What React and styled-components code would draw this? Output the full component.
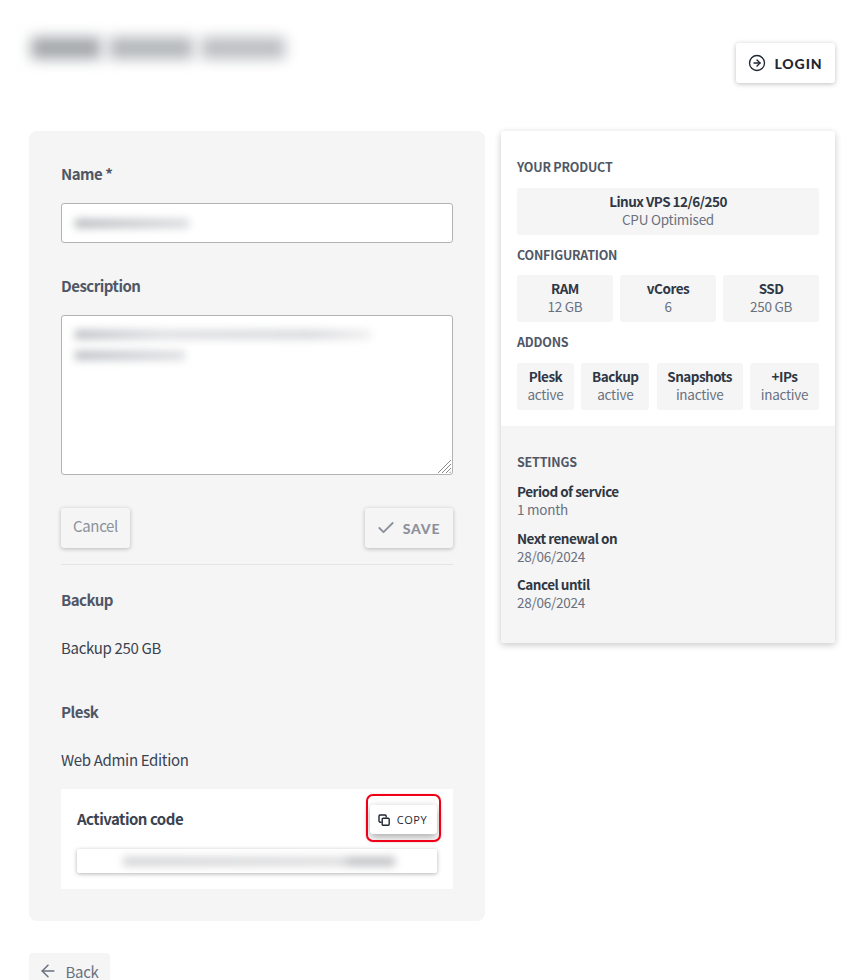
import styled, { createGlobalStyle } from "styled-components";
import { ArrowLeft, Check, CircleArrowRight } from "lucide-react";

const GlobalStyle = createGlobalStyle`
    html, body {
        margin: 0;
        height: 980px;
        overflow: hidden;
        background: #fff;
    }
    body {
        font-family: "Noto Sans CJK JP", "Source Sans Pro", "Open Sans", sans-serif;
        font-size: 15px;
        letter-spacing: -0.33px;
        color: #3b4351;
    }
    * {
        box-sizing: border-box;
    }
`;

const CopyIcon = () => (
    <svg width="12" height="12" viewBox="0 0 12 12" fill="none" stroke="currentColor" strokeWidth="1.4">
        <path d="M3.6 8.2H2a1.2 1.2 0 0 1-1-1V2a1.2 1.2 0 0 1 1-1h5.2a1.2 1.2 0 0 1 1 1v1.6" />
        <rect x="4.2" y="4.2" width="7" height="7" rx="1" />
    </svg>
);

const config = [
    { label: "RAM", value: "12 GB" },
    { label: "vCores", value: "6" },
    { label: "SSD", value: "250 GB" },
];

const addons = [
    { label: "Plesk", value: "active" },
    { label: "Backup", value: "active" },
    { label: "Snapshots", value: "inactive" },
    { label: "+IPs", value: "inactive" },
];

const settings = [
    { label: "Period of service", value: "1 month" },
    { label: "Next renewal on", value: "28/06/2024" },
    { label: "Cancel until", value: "28/06/2024" },
];

function App() {
    return (
        <Page>
            <GlobalStyle />
            <Header>
                <LogoArea>
                    <Blur $w={70} $h={22} $color="#a3a7ab" $blur={7} />
                    <Blur $w={84} $h={22} $color="#b4b7bb" $blur={7} />
                    <Blur $w={84} $h={22} $color="#bcbfc2" $blur={7} />
                </LogoArea>
                <LoginButton>
                    <CircleArrowRight size={18} strokeWidth={1.8} />
                    LOGIN
                </LoginButton>
            </Header>

            <Columns>
                <FormCard>
                    <Label>Name *</Label>
                    <InputBox>
                        <Blur $w={114} $h={9} $color="linear-gradient(90deg, #b5b8bc, #d9dadc)" $blur={4} />
                    </InputBox>
                    <Label $top={31}>Description</Label>
                    <TextareaBox>
                        <Blur $w={296} $h={9} $color="linear-gradient(90deg, #b9bcc0, #dcdde0 30%, #d6d7da 80%, #eeeeef)" $blur={4} />
                        <Blur $w={110} $h={9} $color="linear-gradient(90deg, #b9bcc0, #dcdde0)" $blur={4} />
                        <Grip width="14" height="14" viewBox="0 0 14 14" stroke="#8a8a8a" strokeWidth="1">
                            <path d="M1 14 14 1M5 14 14 5M9 14l5-5M12.5 14l1.5-1.5" />
                        </Grip>
                    </TextareaBox>
                    <Actions>
                        <CancelButton>Cancel</CancelButton>
                        <SaveButton>
                            <Check size={20} strokeWidth={2.2} />
                            SAVE
                        </SaveButton>
                    </Actions>
                    <Divider />
                    <Label $top={23}>Backup</Label>
                    <Value>Backup 250 GB</Value>
                    <Label $top={40}>Plesk</Label>
                    <Value>Web Admin Edition</Value>
                    <CodePanel>
                        <CodeHead>
                            <CodeTitle>Activation code</CodeTitle>
                            <CopyButton>
                                <CopyIcon />
                                COPY
                            </CopyButton>
                        </CodeHead>
                        <CodeField>
                            <Blur $w={272} $h={9} $color="linear-gradient(90deg, #d2d3d5, #dcdcde 80%, #bebfc2 84%, #bebfc2)" $blur={4} />
                        </CodeField>
                    </CodePanel>
                </FormCard>

                <SideCard>
                    <SideTop>
                        <SectionTitle>YOUR PRODUCT</SectionTitle>
                        <Tile>
                            <TileLabel>Linux VPS 12/6/250</TileLabel>
                            <TileValue>CPU Optimised</TileValue>
                        </Tile>
                        <SectionTitle $gap={12}>CONFIGURATION</SectionTitle>
                        <ConfigGrid>
                            {config.map((item) => (
                                <Tile key={item.label}>
                                    <TileLabel>{item.label}</TileLabel>
                                    <TileValue>{item.value}</TileValue>
                                </Tile>
                            ))}
                        </ConfigGrid>
                        <SectionTitle>ADDONS</SectionTitle>
                        <AddonRow>
                            {addons.map((item) => (
                                <Tile key={item.label}>
                                    <TileLabel>{item.label}</TileLabel>
                                    <TileValue>{item.value}</TileValue>
                                </Tile>
                            ))}
                        </AddonRow>
                    </SideTop>
                    <SideBottom>
                        <SectionTitle $gap={12}>SETTINGS</SectionTitle>
                        {settings.map((item) => (
                            <Setting key={item.label}>
                                <TileLabel>{item.label}</TileLabel>
                                <TileValue>{item.value}</TileValue>
                            </Setting>
                        ))}
                    </SideBottom>
                </SideCard>
            </Columns>

            <BackButton>
                <ArrowLeft size={20} strokeWidth={1.8} />
                Back
            </BackButton>
        </Page>
    );
}

export default App;

const Page = styled.div`
    height: 980px;
    overflow: hidden;
    padding: 0 29px;
`;

const Header = styled.header`
    height: 131px;
    display: flex;
    justify-content: space-between;
    align-items: flex-start;
`;

const LogoArea = styled.div`
    display: flex;
    gap: 8px;
    padding: 37px 0 0 2px;
`;

const Blur = styled.div`
    width: ${(p) => p.$w}px;
    height: ${(p) => p.$h}px;
    background: ${(p) => p.$color};
    filter: blur(${(p) => p.$blur}px);
`;

const LoginButton = styled.button`
    margin-top: 43px;
    width: 99px;
    height: 40px;
    display: flex;
    align-items: center;
    justify-content: center;
    gap: 8px;
    background: #fff;
    border: none;
    border-radius: 3px;
    box-shadow: 0 1px 5px rgba(0, 0, 0, 0.25);
    font-family: Lato, sans-serif;
    font-weight: 900;
    font-size: 14px;
    letter-spacing: 0.9px;
    color: #1f2733;
    padding: 0;
`;

const Columns = styled.main`
    display: flex;
    align-items: flex-start;
    gap: 16px;
`;

const FormCard = styled.section`
    width: 456px;
    height: 790px;
    padding: 31px 32px 32px;
    background: #f5f5f5;
    border-radius: 8px;
`;

const Label = styled.div`
    margin-top: ${(p) => p.$top || 0}px;
    font-weight: 700;
    font-size: 15px;
    letter-spacing: -0.5px;
    line-height: 24px;
    color: #4f5765;
`;

const InputBox = styled.div`
    height: 40px;
    margin-top: 17px;
    padding: 15px 16px 0 13px;
    background: #fff;
    border: 1px solid #b3b3b3;
    border-radius: 3px;
`;

const TextareaBox = styled.div`
    position: relative;
    height: 160px;
    margin-top: 17px;
    padding: 14px 16px 0 13px;
    display: flex;
    flex-direction: column;
    gap: 12px;
    background: #fff;
    border: 1px solid #b3b3b3;
    border-radius: 3px;
`;

const Grip = styled.svg`
    position: absolute;
    right: 1px;
    bottom: 1px;
`;

const Actions = styled.div`
    display: flex;
    justify-content: space-between;
    margin-top: 33px;
`;

const CancelButton = styled.button`
    width: 69px;
    height: 40px;
    padding: 0 0 6px;
    background: #f5f5f5;
    border: none;
    border-radius: 3px;
    box-shadow: 0 1px 4px rgba(0, 0, 0, 0.25);
    font-family: inherit;
    font-size: 15px;
    letter-spacing: -0.33px;
    color: #8b919b;
`;

const SaveButton = styled.button`
    width: 88px;
    height: 40px;
    display: flex;
    align-items: center;
    justify-content: center;
    gap: 7px;
    padding: 0 2px 0 0;
    background: #f5f5f5;
    border: none;
    border-radius: 3px;
    box-shadow: 0 1px 4px rgba(0, 0, 0, 0.25);
    font-family: Lato, sans-serif;
    font-weight: 900;
    font-size: 14px;
    letter-spacing: 0.8px;
    color: #8b919b;
`;

const Divider = styled.hr`
    margin: 16px 0 0;
    border: none;
    border-top: 1px solid #e5e5e5;
`;

const Value = styled.div`
    margin-top: 24px;
    font-size: 15px;
    line-height: 24px;
    color: #3b4351;
`;

const CodePanel = styled.div`
    height: 100px;
    margin-top: 17px;
    padding: 16px;
    background: #fff;
`;

const CodeHead = styled.div`
    display: flex;
    align-items: center;
    justify-content: space-between;
    height: 29px;
`;

const CodeTitle = styled.div`
    padding-bottom: 2px;
    font-weight: 700;
    font-size: 15px;
    letter-spacing: -0.5px;
    color: #3b4351;
`;

const CopyButton = styled.button`
    position: relative;
    width: 67px;
    height: 29px;
    display: flex;
    align-items: center;
    justify-content: center;
    gap: 7px;
    padding: 0 2px 0 0;
    background: #fff;
    border: none;
    border-radius: 3px;
    box-shadow: 0 3px 8px rgba(0, 0, 0, 0.35);
    font-family: "Open Sans", sans-serif;
    font-weight: 500;
    font-size: 11px;
    letter-spacing: 0.5px;
    color: #1f2733;
    &::after {
        content: "";
        position: absolute;
        left: -4px;
        right: -4px;
        top: -11px;
        bottom: -8px;
        border: 2px solid #f00018;
        border-radius: 7px;
        box-shadow: 0 0 1px rgba(240, 0, 24, 0.6);
    }
`;

const CodeField = styled.div`
    height: 24px;
    margin-top: 15px;
    padding: 8px 0 0 46px;
    background: #fff;
    border-radius: 2px;
    box-shadow: 0 1px 4px rgba(0, 0, 0, 0.3);
    overflow: hidden;
`;

const SideCard = styled.aside`
    width: 334px;
    background: #fff;
    border-radius: 3px;
    box-shadow: 0 2px 7px rgba(0, 0, 0, 0.22);
    overflow: hidden;
`;

const SideTop = styled.div`
    height: 295px;
    padding: 28px 16px 0;
`;

const SideBottom = styled.div`
    height: 217px;
    padding: 28px 16px 0;
    background: #f5f5f5;
`;

const SectionTitle = styled.div`
    font-weight: 700;
    font-size: 12.5px;
    letter-spacing: -0.2px;
    line-height: 16px;
    color: #4f5765;
    margin-bottom: ${(p) => p.$gap || 13}px;
`;

const Tile = styled.div`
    height: 47px;
    padding: 4px 0 0;
    margin-bottom: 12px;
    background: #f5f5f5;
    border-radius: 3px;
    text-align: center;
`;

const TileLabel = styled.div`
    font-weight: 700;
    font-size: 13.5px;
    letter-spacing: -0.5px;
    line-height: 18px;
    color: #2f3744;
`;

const TileValue = styled.div`
    font-size: 13.5px;
    letter-spacing: -0.25px;
    line-height: 18px;
    color: #697180;
`;

const ConfigGrid = styled.div`
    display: grid;
    grid-template-columns: repeat(3, 96px);
    justify-content: space-between;
`;

const AddonRow = styled.div`
    display: grid;
    grid-template-columns: 57px 68px 86px 69px;
    justify-content: space-between;
`;

const Setting = styled.div`
    margin-bottom: 10.5px;
`;

const BackButton = styled.button`
    margin-top: 32px;
    width: 81px;
    height: 40px;
    display: flex;
    align-items: center;
    justify-content: center;
    gap: 7px;
    padding: 0 2px 4px 0;
    background: #f5f5f5;
    border: none;
    border-radius: 4px;
    font-family: inherit;
    font-size: 15px;
    letter-spacing: -0.3px;
    color: #697180;
`;
